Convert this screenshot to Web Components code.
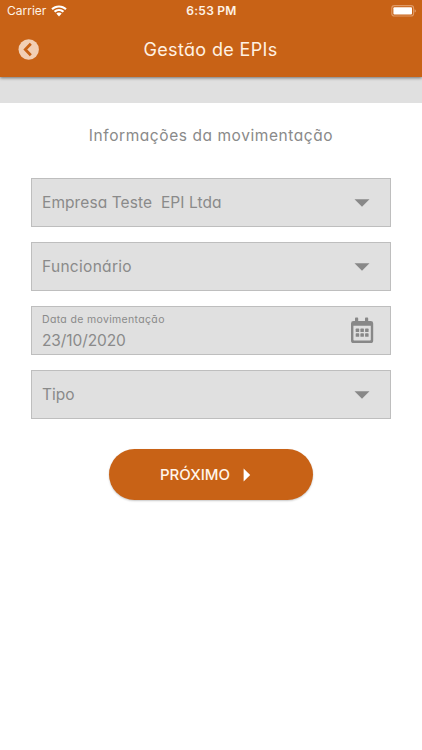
<!DOCTYPE html>
<html lang="pt-BR">
<head>
<meta charset="UTF-8">
<meta name="viewport" content="width=device-width, initial-scale=1">
<title>Gestão de EPIs</title>
<style>
  :root {
    --orange: #c86216;
    --field: #e0e0e0;
    --line: #bebebe;
    --text: #8a8a8a;
  }

  body {
    margin: 0;
    background: #fff;
    color: var(--text);
    font-family: Inter, "Liberation Sans", sans-serif;
    /* single-storey a */
    font-feature-settings: "cv11";
  }
</style>
</head>
<body>
<epi-screen>
  <status-bar slot="header" carrier="Carrier" time="6:53 PM"></status-bar>
  <nav-bar slot="header">Gestão de EPIs</nav-bar>
  <span slot="heading">Informações da movimentação</span>
  <form-field icon="arrow" style="--spacing: 0.08px">Empresa Teste&nbsp; EPI Ltda</form-field>
  <form-field icon="arrow" style="--spacing: 0.3px">Funcionário</form-field>
  <form-field icon="calendar" label="Data de movimentação" style="--spacing: -0.1px">23/10/2020</form-field>
  <form-field icon="arrow">Tipo</form-field>
  <next-button slot="action">PRÓXIMO</next-button>
</epi-screen>

<script>
class StatusBar extends HTMLElement {
  connectedCallback() {
    this.attachShadow({ mode: 'open' });
    this.shadowRoot.innerHTML = `
      <style>
        :host {
          display: grid;
          grid-template-columns: 1fr auto 1fr;
          align-items: center;
          height: 22px;
          padding: 0 6px 0 7px;
          color: #fff3e6;
          font-size: 12px;
          line-height: 22px;
          font-feature-settings: normal;
        }

        .left {
          display: flex;
          align-items: center;
          gap: 5px;
        }

        .time {
          font-weight: 600;
          letter-spacing: 0.25px;
        }

        .battery {
          justify-self: end;
        }

        svg {
          display: block;
        }
      </style>
      <div class="left">
        <span>${this.getAttribute('carrier')}</span>
        <svg width="16" height="12" viewBox="0 0 16 12" fill="#fff">
          <path d="M8 0.4C11 .4 13.7 1.5 15.7 3.4L14.2 5C12.5 3.4 10.4 2.5 8 2.5S3.5 3.4 1.8 5L.3 3.4C2.3 1.5 5 .4 8 .4Z"/>
          <path d="M8 4C10 4 11.8 4.8 13.2 6L11.7 7.6C10.7 6.7 9.4 6.1 8 6.1S5.3 6.7 4.3 7.6L2.8 6C4.2 4.8 6 4 8 4Z"/>
          <path d="M8 7.6C9.1 7.6 10 8 10.7 8.6L8 11.5L5.3 8.6C6 8 6.9 7.6 8 7.6Z"/>
        </svg>
      </div>
      <span class="time">${this.getAttribute('time')}</span>
      <svg class="battery" width="25" height="12" viewBox="0 0 25 12">
        <rect x="0.8" y="0.6" width="21.8" height="10.4" rx="2.6" fill="none" stroke="#e09a66" stroke-width="1.1"/>
        <rect x="2.4" y="2.2" width="18.6" height="7.3" rx="1" fill="#fff"/>
        <path d="M23.7 4.2C25 4.7 25 7 23.7 7.5Z" fill="#e9b48b"/>
      </svg>
    `;
  }
}

class NavBar extends HTMLElement {
  connectedCallback() {
    this.attachShadow({ mode: 'open' });
    this.shadowRoot.innerHTML = `
      <style>
        :host {
          display: grid;
          grid-template-columns: 21px 1fr 21px;
          align-items: center;
          height: 55px;
          padding: 0 19px 0 18px;
          color: #fff1e2;
        }

        svg {
          display: block;
        }

        .title {
          text-align: center;
          font-size: 18px;
          letter-spacing: 0.35px;
          white-space: nowrap;
        }
      </style>
      <svg width="21" height="21" viewBox="0 0 21 21">
        <circle cx="10.7" cy="10.5" r="10.2" fill="#f2cfb5"/>
        <path d="M12.8 4.8L7.3 10.5L12.8 16.2" fill="none" stroke="#c86216" stroke-width="2.8"/>
      </svg>
      <span class="title"><slot></slot></span>
    `;
  }
}

class FormField extends HTMLElement {
  connectedCallback() {
    const label = this.getAttribute('label');
    const icons = {
      arrow: `
        <svg width="16" height="8" viewBox="0 0 16 8">
          <path d="M.5.3H15.5L8 7.8Z" fill="#888"/>
        </svg>`,
      calendar: `
        <svg width="24" height="27" viewBox="0 0 24 27" fill="#888">
          <path fill-rule="evenodd" d="M5 1.4Q5 .6 5.8 .6H7.4Q8.2 .6 8.2 1.4V4H15V1.4Q15 .6 15.8 .6H17.4Q18.2 .6 18.2 1.4V4H20.7Q23.2 4 23.2 6.4V23.4Q23.2 26 20.7 26H3.5Q1 26 1 23.4V6.4Q1 4 3.5 4H5ZM3.4 8.8V22.8Q3.4 23.5 4.1 23.5H20.1Q20.8 23.5 20.8 22.8V8.8Z"/>
          <rect x="5.7" y="11.6" width="3.5" height="3.5" rx=".6"/>
          <rect x="10.4" y="11.6" width="3.5" height="3.5" rx=".6"/>
          <rect x="15.1" y="11.6" width="3.5" height="3.5" rx=".6"/>
          <rect x="5.7" y="16.3" width="3.5" height="3.5" rx=".6"/>
          <rect x="10.4" y="16.3" width="3.5" height="3.5" rx=".6"/>
          <rect x="15.1" y="16.3" width="3.5" height="3.5" rx=".6"/>
        </svg>`
    };

    this.attachShadow({ mode: 'open' });
    this.shadowRoot.innerHTML = `
      <style>
        :host {
          display: flex;
          align-items: center;
          justify-content: space-between;
          box-sizing: border-box;
          height: 49px;
          padding: 0 16px 0 10px;
          background: var(--field);
          border: 1px solid var(--line);
        }

        .text {
          display: flex;
          flex-direction: column;
          white-space: nowrap;
        }

        .label {
          font-size: 10.5px;
          line-height: 16px;
          letter-spacing: 0.34px;
          margin-top: 3px;
        }

        .value {
          font-size: 15.5px;
          line-height: 25px;
          letter-spacing: var(--spacing, 0);
        }

        .icon {
          display: flex;
          justify-content: center;
          width: 24px;
        }
      </style>
      <div class="text">
        ${label ? `<span class="label">${label}</span>` : ''}
        <span class="value"><slot></slot></span>
      </div>
      <span class="icon">${icons[this.getAttribute('icon')]}</span>
    `;
  }
}

class NextButton extends HTMLElement {
  connectedCallback() {
    this.attachShadow({ mode: 'open' });
    this.shadowRoot.innerHTML = `
      <style>
        :host {
          display: block;
        }

        button {
          display: flex;
          align-items: center;
          justify-content: center;
          gap: 13px;
          width: 204px;
          height: 51px;
          padding: 0 11px 0 0;
          border: 0;
          border-radius: 26px;
          background: var(--orange);
          box-shadow: 0 1px 2px rgba(0, 0, 0, 0.22);
          color: #fff5ea;
          font: 500 15px Inter, "Liberation Sans", sans-serif;
        }
      </style>
      <button type="button">
        <span><slot></slot></span>
        <svg width="8" height="14" viewBox="0 0 8 14">
          <path d="M.6.6L7.2 7L.6 13.4Z" fill="#fff"/>
        </svg>
      </button>
    `;
  }
}

class EpiScreen extends HTMLElement {
  connectedCallback() {
    this.attachShadow({ mode: 'open' });
    this.shadowRoot.innerHTML = `
      <style>
        :host {
          display: flex;
          flex-direction: column;
          min-height: 750px;
        }

        header {
          background: var(--orange);
          box-shadow: 0 1px 3px rgba(0, 0, 0, 0.5);
          z-index: 1;
        }

        .strip {
          height: 26px;
          background: var(--field);
        }

        h1 {
          margin: 20px 0 30px;
          text-align: center;
          font-size: 15.5px;
          font-weight: 400;
          line-height: 25px;
          letter-spacing: 0.57px;
        }

        .fields {
          display: flex;
          flex-direction: column;
          gap: 15px;
          margin: 0 31px;
        }

        .action {
          display: flex;
          justify-content: center;
          margin-top: 30px;
        }
      </style>
      <header><slot name="header"></slot></header>
      <div class="strip"></div>
      <h1><slot name="heading"></slot></h1>
      <div class="fields"><slot></slot></div>
      <div class="action"><slot name="action"></slot></div>
    `;
  }
}

customElements.define('status-bar', StatusBar);
customElements.define('nav-bar', NavBar);
customElements.define('form-field', FormField);
customElements.define('next-button', NextButton);
customElements.define('epi-screen', EpiScreen);
</script>
</body>
</html>
